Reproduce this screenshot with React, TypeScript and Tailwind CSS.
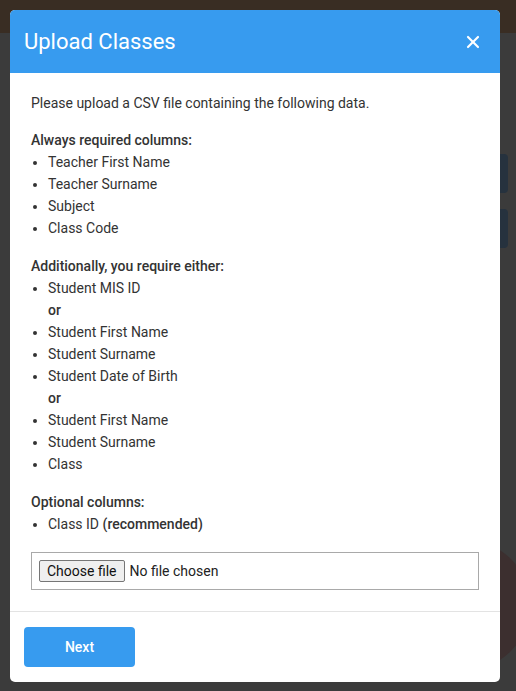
import { X } from "lucide-react";

const requiredColumns = ["Teacher First Name", "Teacher Surname", "Subject", "Class Code"];

// null marks an "or" separator
const eitherColumns: (string | null)[] = [
  "Student MIS ID",
  null,
  "Student First Name",
  "Student Surname",
  "Student Date of Birth",
  null,
  "Student First Name",
  "Student Surname",
  "Class",
];

const ColumnList = ({ items }: { items: (string | null)[] }) => (
  <ul className="list-disc pl-[17px]">
    {items.map((item, i) =>
      item === null ? (
        <li key={i} className="list-none font-medium">
          or
        </li>
      ) : (
        <li key={i}>{item}</li>
      )
    )}
  </ul>
);

const App = () => {
  return (
    <div
      className="relative w-[516px] h-[691px] overflow-hidden bg-[#3b3b3b]"
      style={{ fontFamily: "Roboto, 'Liberation Sans', sans-serif" }}
    >
      {/* dimmed page behind the dialog */}
      <div className="h-[33px] bg-[#392d23]" />
      <div className="absolute right-[8px] top-[154px] flex flex-col gap-[16px]">
        <div className="w-[18px] h-[39px] rounded-[4px] bg-[#26323e]" />
        <div className="w-[18px] h-[39px] rounded-[4px] bg-[#26323e]" />
      </div>
      <div className="absolute left-[380px] top-[540px] w-[150px] h-[130px] rounded-full bg-[#3c2f2f]" />

      <div className="absolute left-[10px] top-[10px] w-[490px] rounded-[5px] bg-white overflow-hidden">
        <div className="flex h-[63px] items-center justify-between bg-[#379bef] pl-[14px] pr-[17px]">
          <h2 className="text-[22px] font-normal text-white">Upload Classes</h2>
          <X size={20} strokeWidth={2.6} className="text-white" />
        </div>

        <div className="px-[21px] pt-[19px] pb-[21px] text-[14px] leading-[22px] text-[#333]">
          <p>Please upload a CSV file containing the following data.</p>

          <p className="mt-[15px] font-medium">Always required columns:</p>
          <ColumnList items={requiredColumns} />

          <p className="mt-[16px] font-medium">Additionally, you require either:</p>
          <ColumnList items={eitherColumns} />

          <p className="mt-[16px] font-medium">Optional columns:</p>
          <ul className="list-disc pl-[17px]">
            <li>
              Class ID <span className="font-medium">(recommended)</span>
            </li>
          </ul>

          <label className="mt-[17px] flex h-[38px] items-center gap-[5px] border border-[#a9a9a9] px-[7px] text-[#222]">
            <input type="file" className="sr-only" />
            <span className="flex h-[22px] items-center rounded-[2px] border border-[#767676] bg-[#efefef] px-[7px] text-[#111]">
              Choose file
            </span>
            <span>No file chosen</span>
          </label>
        </div>

        <div className="border-t border-[#e3e3e3] px-[14px] py-[15px]">
          <button className="h-[40px] w-[111px] rounded-[4px] bg-[#379bef] text-[14px] font-medium text-white">
            Next
          </button>
        </div>
      </div>
    </div>
  );
};

export default App;
